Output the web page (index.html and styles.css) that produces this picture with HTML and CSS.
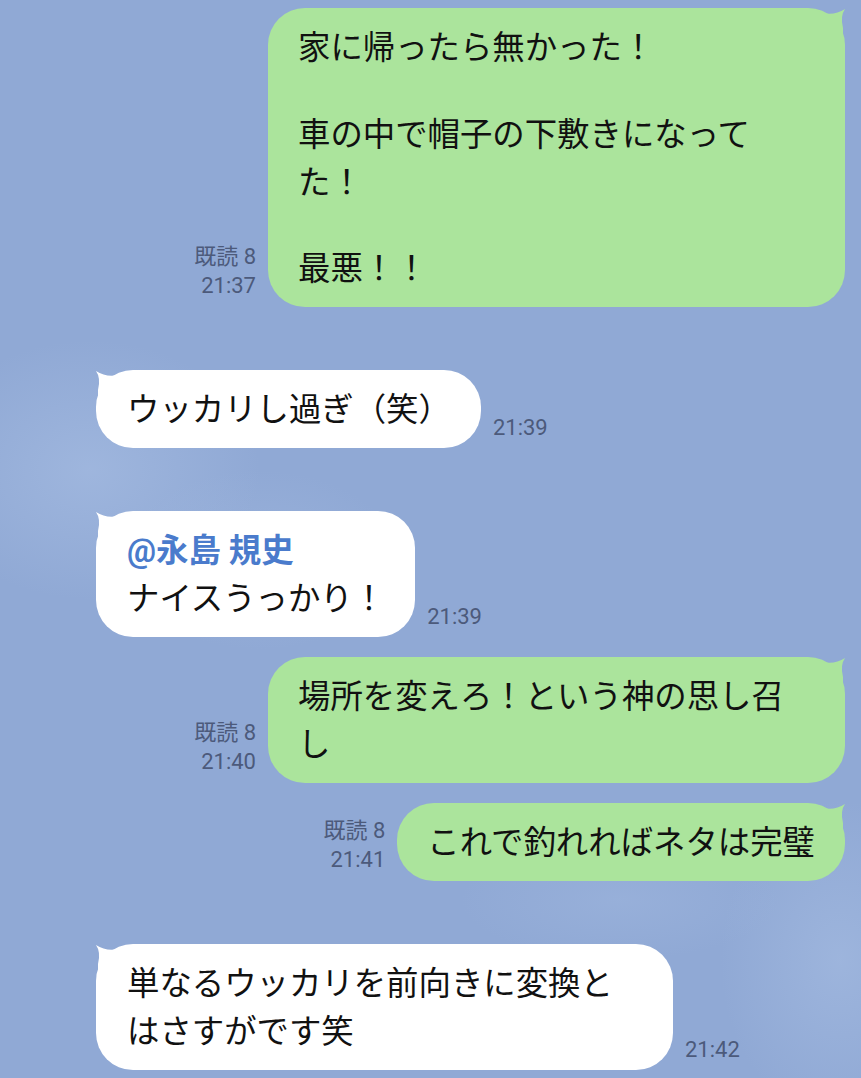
FILE: index.html
```html
<!DOCTYPE html>
<html lang="ja">
<head>
<meta charset="utf-8">
<title>LINE</title>
<link rel="stylesheet" href="styles.css">
</head>
<body>
<main class="chat">
  <div class="row sent first">
    <div class="meta"><span>既読 8</span><span>21:37</span></div>
    <div class="bubble green wide">
      <svg class="tail tail-r" width="44" height="44" viewBox="-42 -2 44 44"><path d="M-42 0 L-28 0 Q-12 8 2 -1 Q-3 6 0 18 L0 42 L-42 42 Z"/></svg>
      <p>家に帰ったら無かった！</p>
      <p>車の中で帽子の下敷きになって<br>た！</p>
      <p>最悪！！</p>
    </div>
  </div>

  <div class="row recv">
    <div class="bubble white">
      <svg class="tail tail-l" width="44" height="44" viewBox="-2 -2 44 44"><path d="M42 0 L28 0 Q12 8 -2 -1 Q3 6 0 18 L0 42 L42 42 Z"/></svg>
      <p>ウッカリし過ぎ（笑）</p>
    </div>
    <div class="time">21:39</div>
  </div>

  <div class="row recv">
    <div class="bubble white">
      <svg class="tail tail-l" width="44" height="44" viewBox="-2 -2 44 44"><path d="M42 0 L28 0 Q12 8 -2 -1 Q3 6 0 18 L0 42 L42 42 Z"/></svg>
      <p><span class="mention">@永島 規史</span><br>ナイスうっかり！</p>
    </div>
    <div class="time">21:39</div>
  </div>

  <div class="row sent">
    <div class="meta"><span>既読 8</span><span>21:40</span></div>
    <div class="bubble green wide">
      <svg class="tail tail-r" width="44" height="44" viewBox="-42 -2 44 44"><path d="M-42 0 L-28 0 Q-12 8 2 -1 Q-3 6 0 18 L0 42 L-42 42 Z"/></svg>
      <p>場所を変えろ！という神の思し召<br>し</p>
    </div>
  </div>

  <div class="row sent">
    <div class="meta"><span>既読 8</span><span>21:41</span></div>
    <div class="bubble green">
      <svg class="tail tail-r" width="44" height="44" viewBox="-42 -2 44 44"><path d="M-42 0 L-28 0 Q-12 8 2 -1 Q-3 6 0 18 L0 42 L-42 42 Z"/></svg>
      <p>これで釣れればネタは完璧</p>
    </div>
  </div>

  <div class="row recv">
    <div class="bubble white wide">
      <svg class="tail tail-l" width="44" height="44" viewBox="-2 -2 44 44"><path d="M42 0 L28 0 Q12 8 -2 -1 Q3 6 0 18 L0 42 L42 42 Z"/></svg>
      <p>単なるウッカリを前向きに変換と<br>はさすがです笑</p>
    </div>
    <div class="time">21:42</div>
  </div>
</main>
</body>
</html>
```

FILE: styles.css
```css
html, body {
  margin: 0;
  padding: 0;
}

body {
  width: 861px;
  height: 1078px;
  overflow: hidden;
  background-color: #90a9d5;
  background-image:
    radial-gradient(ellipse 170px 130px at 90px 470px, rgba(170, 192, 228, 0.55), rgba(170, 192, 228, 0) 100%),
    radial-gradient(ellipse 140px 90px at 260px 560px, rgba(165, 188, 226, 0.4), rgba(165, 188, 226, 0) 100%),
    radial-gradient(ellipse 120px 160px at 840px 960px, rgba(170, 192, 228, 0.5), rgba(170, 192, 228, 0) 100%),
    radial-gradient(ellipse 160px 60px at 620px 900px, rgba(165, 188, 226, 0.35), rgba(165, 188, 226, 0) 100%);
  font-family: Roboto, "Noto Sans CJK JP", sans-serif;
  color: #111;
}

.chat {
  display: flex;
  flex-direction: column;
  padding-top: 8px;
}

.row {
  display: flex;
  align-items: flex-end;
  margin-top: 20px;
}

.row.first {
  margin-top: 0;
}

.row.sent {
  justify-content: flex-end;
  padding-right: 16px;
}

.row.recv {
  justify-content: flex-start;
  padding-left: 96px;
  margin-top: 63px;
}

.bubble {
  position: relative;
  box-sizing: border-box;
  padding: 16px 30px 14px;
  border-radius: 37px;
  font-size: 32.4px;
  line-height: 48px;
  white-space: nowrap;
}

.bubble.white {
  padding-left: 31px;
}

.bubble.wide {
  width: 577px;
}

.bubble p {
  margin: 0;
  position: relative;
}

.bubble p + p {
  margin-top: 38.5px;
}

.green {
  background: #abe49c;
}

.white {
  background: #ffffff;
}

.tail {
  position: absolute;
  top: 0;
  display: block;
  overflow: visible;
}

.tail-r {
  right: 0;
  fill: #abe49c;
}

.tail-l {
  left: 0;
  fill: #ffffff;
}

.mention {
  color: #4a7bcc;
  font-weight: 700;
}

.meta {
  display: flex;
  flex-direction: column;
  align-items: flex-end;
  margin-right: 12px;
  margin-bottom: 7px;
  font-size: 22px;
  line-height: 29px;
  color: #4c5a7b;
}

.time {
  margin-left: 12px;
  margin-bottom: 6px;
  font-size: 22px;
  line-height: 29px;
  color: #4c5a7b;
}
```
